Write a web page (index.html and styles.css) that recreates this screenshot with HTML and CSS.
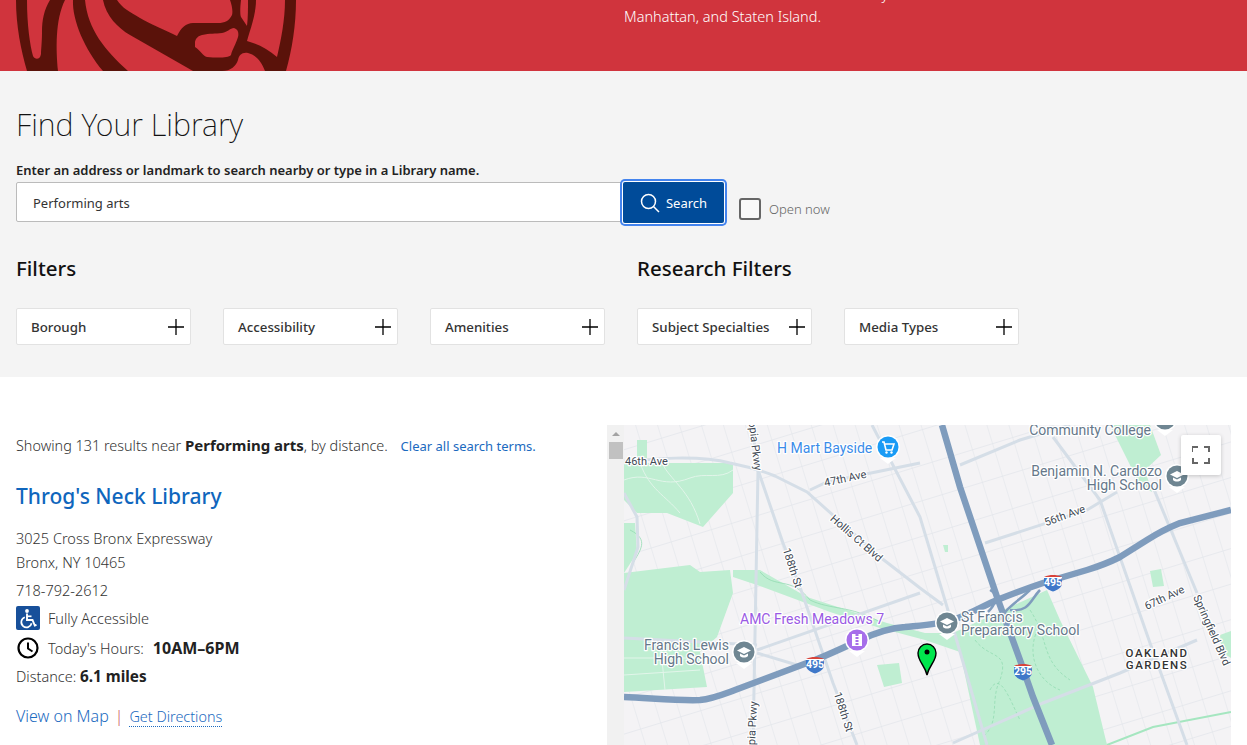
FILE: index.html
```html
<!DOCTYPE html>
<html lang="en">
<head>
    <meta charset="UTF-8">
    <meta name="viewport" content="width=device-width, initial-scale=1.0">
    <title>Find Your Library</title>
    <link rel="stylesheet" href="styles.css">
</head>
<body>
    <div class="banner">
        <svg class="banner-logo" viewBox="16 0 281 71" width="281" height="71">
            <path fill="#5a120a" d="M16 0C16 26 21 50 27 71H58C56 50 55 20 65 0H50C44 10 42 20 42 32C42 42 41 50 41 54C40 60 35 60 33 56C30 45 27 25 27 0Z"/>
            <path fill="#5a120a" d="M73 0C72 20 85 50 103 71H128C105 50 88 30 85 0Z"/>
            <path fill="#5a120a" fill-rule="evenodd" d="M103 0C106 16 118 28 130 35L193 71H222C231 71 236 66 238 60C239 55 242 52 248 53C256 55 262 62 265 71H286C292 50 296 25 296 0H285C285 20 281 40 277 57C268 49 258 44 247 41C250 30 256 15 256 0H230C232 5 233 12 232 15C229 21 225 23 218 23H193C186 23 181 28 177 36C165 30 150 24 140 18C130 12 122 8 117 0ZM195 42C196 38 198 36 202 35C210 33 215 34 222 33C228 32 230 28 234 28C238 29 239 33 238 37C236 44 232 50 231 55C228 58 218 58 207 57C203 56 200 50 195 47ZM241 0C240 8 240 15 241 17L247 26C248 18 248 8 248 0Z"/>
        </svg>
        <p class="banner-text">Visit one of the libraries in the whole city<br>Manhattan, and Staten Island.</p>
    </div>

    <div class="search-panel">
        <h1>Find Your Library</h1>
        <label class="search-label" for="q">Enter an address or landmark to search nearby or type in a Library name.</label>
        <div class="search-row">
            <input id="q" class="search-input" type="text" value="Performing arts">
            <button class="search-btn">
                <svg viewBox="0 0 20 20" width="20" height="20" fill="none" stroke="#fff" stroke-width="1.5"><circle cx="8.5" cy="8.5" r="7"/><path d="M13.5 13.5L19 19"/></svg>
                Search
            </button>
            <div class="open-now"><span class="checkbox"></span>Open now</div>
        </div>
        <div class="filter-groups">
            <div class="filter-group">
                <h2>Filters</h2>
                <div class="filter-list">
                    <div class="filter">Borough<svg viewBox="0 0 16 16" width="16" height="16"><path d="M8 0V16M0 8H16" stroke="#000" stroke-width="1.3"/></svg></div>
                    <div class="filter">Accessibility<svg viewBox="0 0 16 16" width="16" height="16"><path d="M8 0V16M0 8H16" stroke="#000" stroke-width="1.3"/></svg></div>
                    <div class="filter">Amenities<svg viewBox="0 0 16 16" width="16" height="16"><path d="M8 0V16M0 8H16" stroke="#000" stroke-width="1.3"/></svg></div>
                </div>
            </div>
            <div class="filter-group">
                <h2>Research Filters</h2>
                <div class="filter-list">
                    <div class="filter">Subject Specialties<svg viewBox="0 0 16 16" width="16" height="16"><path d="M8 0V16M0 8H16" stroke="#000" stroke-width="1.3"/></svg></div>
                    <div class="filter">Media Types<svg viewBox="0 0 16 16" width="16" height="16"><path d="M8 0V16M0 8H16" stroke="#000" stroke-width="1.3"/></svg></div>
                </div>
            </div>
        </div>
    </div>

    <div class="results">
        <div class="results-list">
            <p class="summary">Showing 131 results near <b>Performing arts</b>, by distance. <a class="clear-link" href="#">Clear all search terms.</a></p>
            <h3 class="lib-name">Throg's Neck Library</h3>
            <p class="lib-line first">3025 Cross Bronx Expressway</p>
            <p class="lib-line">Bronx, NY 10465</p>
            <p class="lib-line phone">718-792-2612</p>
            <div class="lib-line icon-line access">
                <svg class="access-icon" viewBox="0 0 24 24" width="24" height="24">
                    <rect width="24" height="24" rx="2" fill="#17509a"/>
                    <circle cx="11" cy="5" r="1.9" fill="#fff"/>
                    <path d="M11 7.5V14H16.5L18.8 19.5L20.5 18.8" fill="none" stroke="#fff" stroke-width="1.9"/>
                    <path d="M11 10.3H15.5" stroke="#fff" stroke-width="1.7"/>
                    <path d="M8.8 11.3A5.2 5.2 0 1 0 15.6 17.3" fill="none" stroke="#fff" stroke-width="1.7"/>
                </svg>
                <span>Fully Accessible</span>
            </div>
            <div class="lib-line icon-line hours">
                <svg class="clock-icon" viewBox="0 0 24 24" width="24" height="24" fill="none" stroke="#000">
                    <circle cx="12" cy="12" r="9.5" stroke-width="2.2"/>
                    <path d="M12 6.5V12.5L16.5 15.5" stroke-width="2"/>
                </svg>
                <span>Today's Hours:</span><b class="hours-value">10AM–6PM</b>
            </div>
            <p class="lib-line distance">Distance: <b>6.1 miles</b></p>
            <p class="lib-links"><a href="#">View on Map</a><span class="sep">|</span><a class="dotted" href="#">Get Directions</a></p>
        </div>

        <div class="map-wrap">
            <div class="map-scrollbar"><span class="scroll-arrow"></span><span class="scroll-thumb"></span></div>
            <div class="map">
                <svg class="map-canvas" viewBox="624 425 607 320" width="607" height="320">
                    <defs>
                        <pattern id="streets" width="21" height="34" patternUnits="userSpaceOnUse" patternTransform="rotate(-17)">
                            <path d="M0 0V34M0 0H21" stroke="#e3e6eb" stroke-width="1.300" fill="none"/>
                        </pattern>
                        <g id="school-pin">
                            <path d="M-8 11L0 17L8 11Z" fill="#fff"/>
                            <circle r="12" fill="#fff"/>
                            <circle r="10.5" fill="#6f8692"/>
                            <path d="M-7 -1.5L0 -5L7 -1.5L0 2Z" fill="#fff"/>
                            <path d="M-4 1.5V4C-2 6 2 6 4 4V1.5L0 3.5Z" fill="#fff"/>
                        </g>
                        <g id="shield">
                            <path d="M-9 -5C-6 -6.500 -3 -7 0 -7C3 -7 6 -6.500 9 -5V-2H-9Z" fill="#d8433a"/>
                            <path d="M-9 -4H9V1C9 6 4 8 0 9.500C-4 8 -9 6 -9 1Z" fill="#3f78c9"/>
                            <path d="M-9 -4.500H9" stroke="#fff" stroke-width="1"/>
                        </g>
                    </defs>
                    <rect x="624" y="425" width="607" height="320" fill="#f4f3f5"/>
                    <rect x="624" y="425" width="607" height="320" fill="url(#streets)"/>

                    <g fill="#bfeed2">
                        <path d="M624 463H733V493L703 527L667 513H637L624 500Z"/>
                        <path d="M637 440H647V463H637Z"/>
                        <path d="M624 523H635L637 553L624 573Z"/>
                        <path d="M624 573L690 565L700 572L730 570L733 593L717 637L700 652L707 687L624 692Z"/>
                        <path d="M733 570H745L760 570L807 597L887 623L925 633L953 633L1047 590L1060 620L1093 687L1107 745H980L960 652L925 640L880 628L830 612L757 585L733 577Z"/>
                        <path d="M877 665L899 663L902 683L884 687Z"/>
                        <path d="M1110 425H1150L1161 455L1145 470L1152 492L1140 485Z"/>
                        <path d="M1150 571L1161 569L1164 586L1153 587Z"/>
                        <path d="M943 545H948V552H945Z"/>
                        <path d="M1220 635L1231 631V658L1222 652Z"/>
                    </g>
                    <g fill="none" stroke="#e2f5ea" stroke-width="1">
                        <path d="M624 480C650 470 660 490 690 478C705 472 720 480 733 470"/>
                        <path d="M640 463C650 490 665 495 680 513"/>
                        <path d="M662 463C670 480 690 490 700 524"/>
                        <path d="M624 658H690M624 675L700 670M660 640L665 690"/>
                    </g>
                    <g fill="none" stroke="#93dcb2" stroke-width="0.8">
                        <path d="M760 572C775 590 790 575 810 600C830 610 850 605 880 622"/>
                        <path d="M630 530C650 540 640 550 632 565"/>
                        <path d="M975 640C990 660 1010 650 1000 680C990 700 1000 720 985 735" stroke-dasharray="3 2"/>
                        <path d="M1030 610C1050 640 1040 660 1070 680" stroke-dasharray="3 2"/>
                        <path d="M1040 625C1025 650 1035 680 1060 690" stroke-dasharray="3 2"/>
                        <path d="M990 690C1000 670 1010 700 1020 720" stroke-dasharray="3 2"/>
                        <path d="M1107 745L1153 727L1231 712" stroke="#a5e6c0" stroke-width="2"/>
                    </g>

                    <g fill="none" stroke="#d5dee7" stroke-width="3">
                        <path d="M752 425L758 470L753 745"/>
                        <path d="M758 470L783 543L800 587L833 683L857 745"/>
                        <path d="M624 463C650 458 700 455 730 463C745 466 760 470 775 476L807 492L880 557L920 588L943 605"/>
                        <path d="M810 490L827 482L920 463"/>
                        <path d="M872 425L920 517L947 607L987 745"/>
                        <path d="M1053 437L1100 500L1150 643L1187 745"/>
                        <path d="M1153 487L1197 593"/>
                        <path d="M960 465L1020 440L1070 425"/>
                        <path d="M985 543L1087 510L1117 492"/>
                        <path d="M757 650L920 593"/>
                        <path d="M757 653L797 665"/>
                        <path d="M624 638L757 645"/>
                        <path d="M953 743L1043 703L1120 673L1197 640"/>
                        <path d="M624 493L637 517L638 547L624 590"/>
                    </g>

                    <g fill="none" stroke="#7f9cbd" stroke-width="6.500">
                        <path d="M624 697C650 698 680 701 700 700C712 699 724 694 735 690L815 660C830 654 845 647 860 640C875 633 890 628 905 627C925 625 940 624 953 620C970 614 985 605 997 600C1012 594 1028 588 1043 583L1087 570C1100 566 1110 562 1120 557L1147 540C1158 533 1170 527 1180 523L1231 510"/>
                        <path d="M942 425L960 487L997 597L1020 660L1033 697L1052 745"/>
                    </g>
                    <g fill="none" stroke="#7f9cbd" stroke-width="2.500">
                        <path d="M988 612C995 605 1000 595 990 590"/>
                        <path d="M1010 610C1030 612 1030 600 1040 590"/>
                        <path d="M1000 620C1005 608 1020 600 1030 590"/>
                    </g>

                    <g class="map-label road">
                        <text x="625" y="465">46th Ave</text>
                        <text transform="translate(846 482) rotate(-12)" text-anchor="middle">47th Ave</text>
                        <text transform="translate(854 541) rotate(41)" text-anchor="middle">Hollis Ct Blvd</text>
                        <text transform="translate(789 569) rotate(72)" text-anchor="middle">188th St</text>
                        <text transform="translate(840 713) rotate(72)" text-anchor="middle">188th St</text>
                        <text transform="translate(751 441) rotate(83)" text-anchor="middle">Utopia Pkwy</text>
                        <text transform="translate(754 762) rotate(-87)">Utopia Pkwy</text>
                        <text transform="translate(1066 519) rotate(-20)" text-anchor="middle">56th Ave</text>
                        <text transform="translate(1166 601) rotate(-25)" text-anchor="middle">67th Ave</text>
                        <text transform="translate(1193 597) rotate(66)">Springfield Blvd</text>
                    </g>
                    <g class="map-label area">
                        <text x="1157" y="657" text-anchor="middle">OAKLAND</text>
                        <text x="1157" y="669" text-anchor="middle">GARDENS</text>
                    </g>
                    <g class="map-label poi blue"><text x="777" y="453">H Mart Bayside</text></g>
                    <g class="map-label poi purple"><text x="740" y="624">AMC Fresh Meadows 7</text></g>
                    <g class="map-label poi grey">
                        <text x="729" y="650" text-anchor="end">Francis Lewis</text>
                        <text x="729" y="664" text-anchor="end">High School</text>
                        <text x="961" y="622">St Francis</text>
                        <text x="961" y="635">Preparatory School</text>
                        <text x="1151" y="435" text-anchor="end">Community College</text>
                        <text x="1162" y="476" text-anchor="end">Benjamin N. Cardozo</text>
                        <text x="1162" y="490" text-anchor="end">High School</text>
                    </g>

                    <g class="poi-pin">
                        <path d="M880 458L888 464L896 458Z" fill="#fff"/>
                        <circle cx="888" cy="447" r="12" fill="#fff"/>
                        <circle cx="888" cy="447" r="10.5" fill="#1a9bf5"/>
                        <path d="M882 442H884L886 450H892L894 444H885" fill="none" stroke="#fff" stroke-width="1.6"/>
                        <circle cx="886.5" cy="452.5" r="1.2" fill="#fff"/><circle cx="891.5" cy="452.5" r="1.2" fill="#fff"/>
                    </g>
                    <g class="poi-pin">
                        <path d="M849 651L857 657L865 651Z" fill="#fff"/>
                        <circle cx="857" cy="640" r="12" fill="#fff"/>
                        <circle cx="857" cy="640" r="10.5" fill="#a66eea"/>
                        <rect x="852" y="634" width="10" height="12" fill="#fff"/>
                        <path d="M857 634V646" stroke="#a66eea" stroke-width="3" stroke-dasharray="2 1"/>
                    </g>
                    <use href="#school-pin" x="744" y="652"/>
                    <use href="#school-pin" x="947" y="623"/>
                    <use href="#school-pin" x="1165" y="419"/>
                    <use href="#school-pin" x="1177" y="476"/>
                    <use href="#shield" x="815" y="664"/>
                    <use href="#shield" x="1053" y="582"/>
                    <use href="#shield" x="1023" y="671"/>
                    <g class="shield-text">
                        <text x="815" y="668">495</text>
                        <text x="1053" y="586">495</text>
                        <text x="1023" y="675">295</text>
                    </g>

                    <path d="M927 675C925 665 918 662 918 653A9 9 0 0 1 936 653C936 662 929 665 927 675Z" fill="#00e64d" stroke="#000" stroke-width="1.4"/>
                    <circle cx="927" cy="652" r="2.500" fill="#000"/>
                </svg>
                <button class="map-fullscreen" aria-label="Toggle fullscreen view">
                    <svg viewBox="0 0 18 18" width="18" height="18" fill="none" stroke="#666" stroke-width="2"><path d="M0 6V1H6M12 1H17V6M17 12V17H12M6 17H1V12"/></svg>
                </button>
            </div>
        </div>
    </div>
</body>
</html>
```

FILE: styles.css
```css
* {
    box-sizing: border-box;
}
body {
    margin: 0;
    height: 745px;
    overflow: hidden;
    background-color: #fff;
    color: #333;
    font-family: "Noto Sans", "Open Sans", Arial, sans-serif;
    font-size: 15px;
}
p, h1, h2, h3 {
    margin: 0;
}
a {
    color: #1b6ac0;
    text-decoration: none;
}

/* red banner, page is scrolled so the top is cut off */
.banner {
    display: flex;
    height: 71px;
    overflow: hidden;
    background-color: #d0343d;
}
.banner-logo {
    flex: none;
    margin-left: 16px;
}
.banner-text {
    align-self: flex-end;
    margin-left: 327px;
    padding-bottom: 44px;
    white-space: nowrap;
    color: #fff;
    font-size: 14.500px;
    font-weight: 300;
    line-height: 22px;
}

/* search panel */
.search-panel {
    height: 306px;
    padding: 32px 16px;
    background-color: #f4f4f4;
}
.search-panel h1 {
    color: #111;
    font-size: 30.500px;
    font-weight: 200;
    line-height: 42px;
}
.search-label {
    display: block;
    margin-top: 15px;
    color: #222;
    font-size: 13px;
    font-weight: 600;
    line-height: 20px;
}
.search-row {
    display: flex;
    align-items: flex-start;
    margin-top: 2px;
}
.search-input {
    width: 606px;
    height: 40px;
    padding: 2px 16px 0;
    border: 1px solid #bbb;
    border-radius: 2px 0 0 2px;
    background-color: #fff;
    color: #333;
    font-family: inherit;
    font-size: 13px;
}
.search-btn {
    display: flex;
    align-items: center;
    justify-content: center;
    gap: 6px;
    width: 101px;
    height: 41px;
    margin-left: 1px;
    border: 0;
    border-radius: 2px;
    background-color: #004b99;
    box-shadow: 0 0 0 1px #fff, 0 0 0 3px #4484ee;
    color: #fff;
    font-family: inherit;
    font-size: 13px;
}
.open-now {
    display: flex;
    align-items: center;
    gap: 8px;
    margin: 16px 0 0 15px;
    color: #666;
    font-size: 13px;
    font-weight: 300;
    line-height: 22px;
}
.checkbox {
    width: 22px;
    height: 22px;
    border: 2px solid #666;
    border-radius: 3px;
    background-color: #f9f9f9;
}
.filter-groups {
    display: flex;
    gap: 32px;
    margin-top: 30px;
}
.filter-group {
    width: 589px;
}
.filter-group h2 {
    color: #111;
    font-size: 20.500px;
    font-weight: 500;
    line-height: 30px;
}
.filter-list {
    display: flex;
    gap: 32px;
    margin-top: 25px;
}
.filter {
    display: flex;
    align-items: center;
    justify-content: space-between;
    width: 175px;
    height: 37px;
    padding: 0 6px 0 14px;
    border: 1px solid #e2e2e2;
    border-radius: 2px;
    background-color: #fff;
    color: #333;
    font-size: 13.300px;
    font-weight: 500;
}

/* results + map */
.results {
    display: flex;
    padding: 48px 16px 0;
}
.results-list {
    width: 591px;
    padding-top: 8px;
    font-weight: 300;
}
.summary {
    font-size: 14.400px;
    line-height: 24px;
    white-space: nowrap;
}
.summary b {
    color: #222;
    font-size: 15px;
    font-weight: 700;
}
.lib-line b {
    color: #222;
    font-size: 15.300px;
    font-weight: 700;
}
.clear-link {
    margin-left: 9px;
    font-size: 13px;
    font-weight: 400;
}
.lib-name {
    margin-top: 23px;
    color: #0f66bd;
    font-size: 21px;
    font-weight: 500;
    line-height: 30px;
}
.lib-line {
    font-size: 14.500px;
    line-height: 24px;
}
.lib-line.first {
    margin-top: 15px;
}
.lib-line.phone {
    margin-top: 4px;
}
.icon-line {
    display: flex;
    align-items: center;
    white-space: nowrap;
}
.lib-line.access {
    margin-top: 4px;
}
.lib-line.hours {
    margin-top: 6px;
}
.lib-line.distance {
    margin-top: 4px;
}
.access-icon,
.clock-icon {
    flex: none;
    margin-right: 8px;
}
.lib-line .hours-value {
    margin-left: 9px;
    font-size: 16px;
}
.lib-links {
    margin-top: 16px;
    font-size: 16px;
    line-height: 24px;
}
.sep {
    margin: 0 6px;
    color: #c9585d;
}
.dotted {
    border-bottom: 1px dotted #1b6ac0;
    font-size: 14.400px;
}

.map-wrap {
    display: flex;
    flex: none;
    width: 624px;
    height: 320px;
}
.map-scrollbar {
    display: flex;
    flex: none;
    flex-direction: column;
    align-items: center;
    width: 17px;
    background-color: #f1f1f1;
}
.scroll-arrow {
    width: 0;
    height: 0;
    margin-top: 7px;
    border: 4px solid transparent;
    border-top: 0;
    border-bottom: 4px solid #a3a3a3;
}
.scroll-thumb {
    width: 14px;
    height: 17px;
    margin-top: 6px;
    background-color: #c1c1c1;
}
.map {
    position: relative;
    width: 607px;
    height: 320px;
    overflow: hidden;
}
.map-canvas {
    display: block;
}
.map-fullscreen {
    position: absolute;
    top: 10px;
    right: 10px;
    display: flex;
    align-items: center;
    justify-content: center;
    width: 40px;
    height: 40px;
    padding: 0;
    border: 0;
    border-radius: 2px;
    background-color: #fff;
    box-shadow: 0 1px 4px rgba(0, 0, 0, 0.2);
}
.map-label text {
    font-family: Roboto, Arial, sans-serif;
    paint-order: stroke;
    stroke: #fff;
    stroke-width: 2.500px;
    stroke-linejoin: round;
}
.road text {
    fill: #3f4a55;
    font-size: 11px;
}
.area text {
    fill: #333;
    font-size: 11.500px;
    font-weight: 500;
    letter-spacing: 1.500px;
}
.poi text {
    font-size: 14px;
}
.poi.blue text {
    fill: #3b8ce9;
}
.poi.purple text {
    fill: #9a5ae4;
}
.poi.grey text {
    fill: #66788a;
}
.shield-text text {
    fill: #fff;
    font-family: Roboto, Arial, sans-serif;
    font-size: 10.500px;
    font-weight: 700;
    text-anchor: middle;
}
```
